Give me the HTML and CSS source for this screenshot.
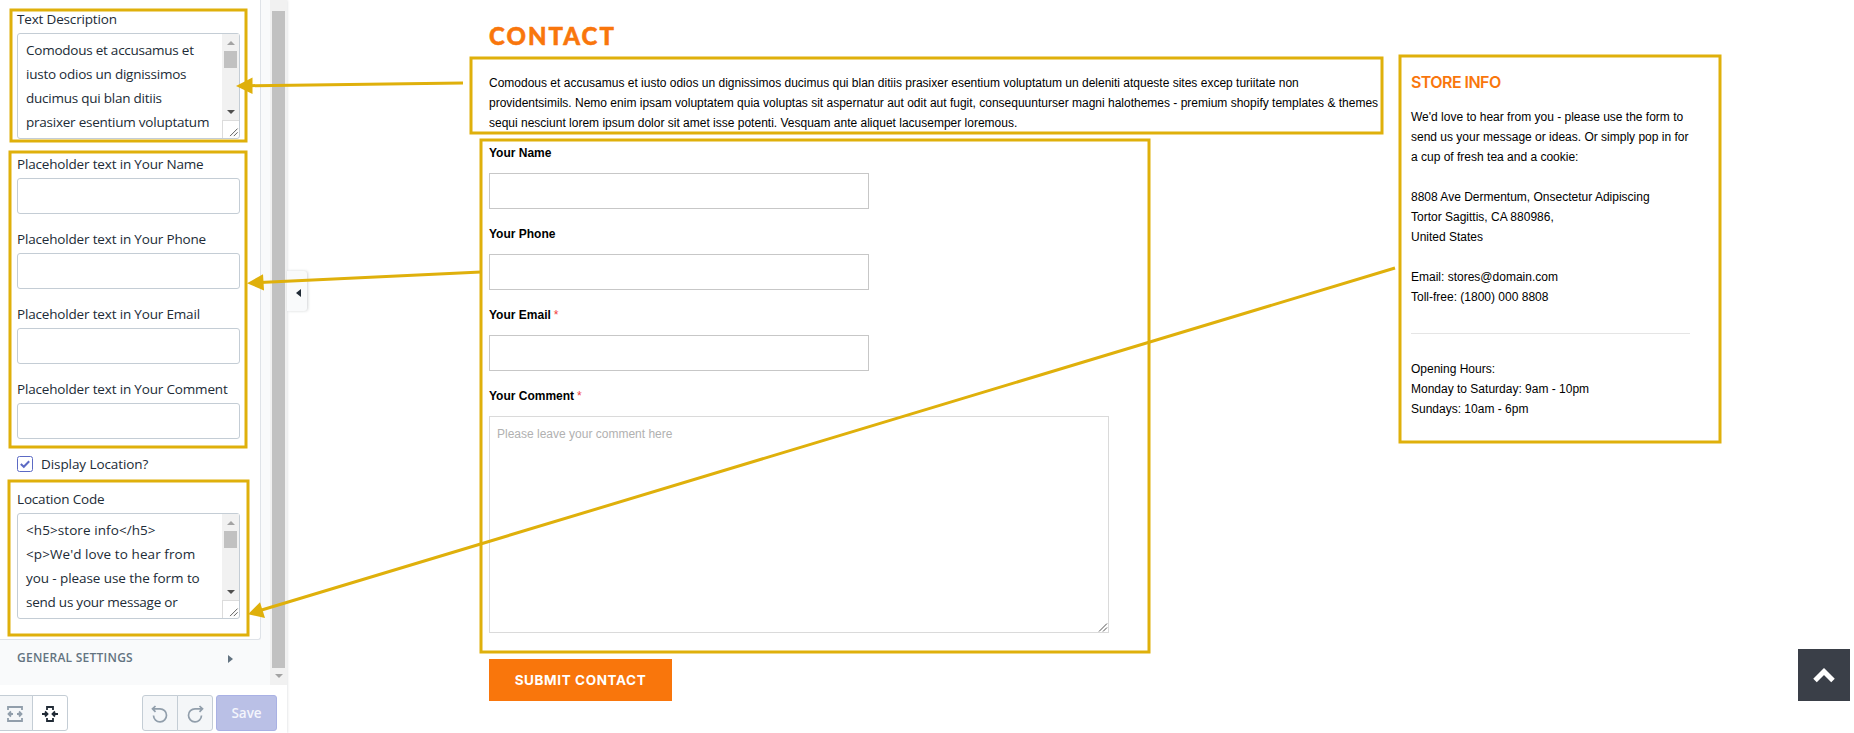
FILE: index.html
```
<!DOCTYPE html>
<html lang="en">
<head>
<meta charset="utf-8">
<title>Contact page settings</title>
<link rel="stylesheet" href="styles.css">
</head>
<body>
<div class="app">
  <aside class="sidebar">
    <div class="scroller">
      <div class="scroll-content">
        <section class="panel">
          <div class="label first">Text Description</div>
          <div class="textbox">
            <div class="textbox-lines">Comodous et accusamus et<br>iusto odios un dignissimos<br>ducimus qui blan ditiis<br>prasixer esentium voluptatum</div>
            <div class="mini-scroll">
              <div class="mini-track"><i class="tri up"></i><i class="mini-thumb"></i><i class="tri down"></i></div>
              <svg class="grip" width="17" height="17" viewBox="0 0 17 17"><path d="M7.500 15.500L15.500 7.500M11.500 15.500L15.500 11.500"/></svg>
            </div>
          </div>
          <div class="fields">
            <div class="field"><div class="label">Placeholder text in Your Name</div><div class="input"></div></div>
            <div class="field"><div class="label">Placeholder text in Your Phone</div><div class="input"></div></div>
            <div class="field"><div class="label">Placeholder text in Your Email</div><div class="input"></div></div>
            <div class="field"><div class="label">Placeholder text in Your Comment</div><div class="input"></div></div>
          </div>
          <div class="check-row">
            <svg width="16" height="16" viewBox="0 0 16 16"><rect x=".5" y=".5" width="15" height="15" rx="2" fill="#fff" stroke="#5c6ac4"/><path d="M3.800 8l3 2.800 5.400-5.600" fill="none" stroke="#5c6ac4" stroke-width="2"/></svg>
            <span>Display Location?</span>
          </div>
          <div class="label location">Location Code</div>
          <div class="textbox">
            <div class="textbox-lines"><span class="code">&lt;h5&gt;store info&lt;/h5&gt;<br>&lt;p&gt;We'd love to hear from</span><br><span class="loose">you - please use the form to</span><br>send us your message or</div>
            <div class="mini-scroll">
              <div class="mini-track"><i class="tri up"></i><i class="mini-thumb"></i><i class="tri down"></i></div>
              <svg class="grip" width="17" height="17" viewBox="0 0 17 17"><path d="M7.500 15.500L15.500 7.500M11.500 15.500L15.500 11.500"/></svg>
            </div>
          </div>
        </section>
        <div class="general"><span>GENERAL SETTINGS</span><i class="tri right"></i></div>
      </div>
      <div class="scrollbar"><i class="thumb"></i><i class="tri down"></i></div>
    </div>
    <footer class="toolbar">
      <div class="btn wide">
        <svg width="18" height="18" viewBox="0 0 18 18" fill="none" stroke="#919eab" stroke-width="1.800"><path d="M2 5V2h14v3M2 13v3h14v-3M2 9h5M11 9h5M5 6.500L2.500 9 5 11.500M13 6.500L15.500 9 13 11.500"/></svg>
      </div>
      <div class="btn narrow">
        <svg width="18" height="18" viewBox="0 0 18 18" fill="none" stroke="#212b36" stroke-width="1.800"><path d="M6 5V2h6v3M6 13v3h6v-3M1 9h5.500M17 9h-5.500M4 6.500L6.500 9 4 11.500M14 6.500L11.500 9l2.500 2.500"/></svg>
      </div>
      <div class="btn undo">
        <svg width="18" height="18" viewBox="0 0 18 18" fill="none" stroke="#919eab" stroke-width="1.700"><path d="M4.500 1L1.500 3.800l3 3M1.500 3.800H9a6.500 6.500 0 1 1-6.500 6.700"/></svg>
      </div>
      <div class="btn redo">
        <svg width="18" height="18" viewBox="0 0 18 18" fill="none" stroke="#919eab" stroke-width="1.700"><path d="M13.500 1l3 2.800-3 3M16.500 3.800H9a6.500 6.500 0 1 0 6.500 6.700"/></svg>
      </div>
      <div class="save">Save</div>
    </footer>
    <div class="collapse"><i class="tri left"></i></div>
  </aside>

  <main class="preview">
    <section class="contact">
      <h1>CONTACT</h1>
      <p class="intro">Comodous et accusamus et iusto odios un dignissimos ducimus qui blan ditiis prasixer esentium voluptatum un deleniti atqueste sites excep turiitate non<br>providentsimils. Nemo enim ipsam voluptatem quia voluptas sit aspernatur aut odit aut fugit, consequunturser magni halothemes - premium shopify templates &amp; themes<br>sequi nesciunt lorem ipsum dolor sit amet isse potenti. Vesquam ante aliquet lacusemper loremous.</p>
      <div class="form-row"><div class="form-label">Your Name</div><div class="form-input"></div></div>
      <div class="form-row"><div class="form-label">Your Phone</div><div class="form-input"></div></div>
      <div class="form-row"><div class="form-label">Your Email <em>*</em></div><div class="form-input"></div></div>
      <div class="form-row comment-row"><div class="form-label">Your Comment <em>*</em></div>
        <div class="form-comment"><span>Please leave your comment here</span>
          <svg class="corner" width="10" height="10" viewBox="0 0 10 10"><path d="M1 9.500L9 1.500M5 9.500L9 5.500"/></svg>
        </div>
      </div>
      <div class="submit"><span>SUBMIT CONTACT</span></div>
    </section>
    <section class="store">
      <h5>STORE INFO</h5>
      <p>We'd love to hear from you - please use the form to<br>send us your message or ideas. Or simply pop in for<br>a cup of fresh tea and a cookie:</p>
      <p>8808 Ave Dermentum, Onsectetur Adipiscing<br>Tortor Sagittis, CA 880986,<br>United States</p>
      <p>Email: stores@domain.com<br>Toll-free: (1800) 000 8808</p>
      <p class="hours">Opening Hours:<br>Monday to Saturday: 9am - 10pm<br>Sundays: 10am - 6pm</p>
    </section>
  </main>
  <div class="to-top"><svg width="24" height="18" viewBox="0 0 24 18"><path d="M3 14.500L12 5.500l9 9" fill="none" stroke="#fff" stroke-width="5"/></svg></div>

  <svg class="notes" width="1854" height="733" viewBox="0 0 1854 733">
    <g fill="none" stroke="#dfb00b" stroke-width="3">
      <rect x="11" y="10" width="235" height="131"/>
      <rect x="10" y="152" width="236" height="295"/>
      <rect x="9" y="481" width="239" height="154"/>
      <rect x="471" y="58" width="911" height="75"/>
      <rect x="481" y="140" width="668" height="512"/>
      <rect x="1400" y="56" width="320" height="386"/>
      <path d="M463 83L250 85.700M481 272L260 282.500M1395 268L260 610.500"/>
    </g>
    <g fill="#dfb00b">
      <path d="M236 86L252.500 77.500V94z"/>
      <path d="M247 283.200L263 274.300L264 290.500z"/>
      <path d="M248 614.200L260 602.200L265 618z"/>
    </g>
  </svg>
</div>
</body>
</html>
```
FILE: styles.css
```
* { box-sizing: border-box; }
body { margin: 0; background: #fff; overflow: hidden; }
.app { position: relative; display: flex; width: 1854px; height: 733px; overflow: hidden; }

.sidebar {
  position: relative; width: 287px; height: 733px; display: flex; flex-direction: column;
  font: 14px/20px "Open Sans", sans-serif; color: #212b36; background: #fff;
  box-shadow: 0 0 3px rgba(33, 43, 54, .2);
}
.scroller { display: flex; height: 685px; background: #f9fafb; }
.scroll-content { width: 270px; }
.panel {
  width: 261px; height: 640px; padding: 9px 20px 0 17px; background: #fff;
  border-right: 1px solid #dfe3e8; border-bottom: 1px solid #dfe3e8; border-radius: 0 0 3px 0;
}
.label { height: 20px; font-size: 13.5px; letter-spacing: -.17px; white-space: nowrap; }
.label.first { margin-bottom: 4px; }
.textbox {
  display: flex; justify-content: space-between; width: 223px; height: 106px;
  border: 1px solid #c4cdd5; border-radius: 3px; background: #fff;
}
.textbox-lines { width: 204px; padding: 4px 0 0 8px; font-size: 13.5px; line-height: 24px; letter-spacing: -.24px; white-space: nowrap; }
.textbox-lines .code { letter-spacing: .08px; }
.textbox-lines .loose { letter-spacing: -.08px; }
.mini-scroll { width: 17px; }
.mini-track { height: 87px; background: #f1f1f1; display: flex; flex-direction: column; align-items: center; padding-top: 7px; border-bottom: 1px solid #dcdcdc; }
.mini-thumb { width: 13px; height: 17px; margin-top: 6px; margin-bottom: 42px; background: #c1c1c1; }
.grip { display: block; border-left: 1px solid #dcdcdc; }
.grip path, .corner path { stroke: #555; stroke-width: 1; fill: none; }
.tri { display: block; width: 0; height: 0; border: 0 solid transparent; flex: none; }
.tri.up { border-width: 0 4px 4px; border-bottom-color: #a3a3a3; }
.tri.down { border-width: 4px 4px 0; border-top-color: #505050; }
.tri.right { border-width: 4px 0 4px 5px; border-left-color: #637381; }
.tri.left { border-width: 4px 5px 4px 0; border-right-color: #212b36; }
.fields { padding-top: 15px; display: flex; flex-direction: column; gap: 15px; }
.field { height: 60px; }
.input { width: 223px; height: 36px; margin-top: 4px; border: 1px solid #c4cdd5; border-radius: 3px; }
.check-row { display: flex; align-items: center; gap: 8px; margin-top: 15px; height: 20px; font-size: 13.5px; letter-spacing: -.08px; }
.label.location { margin: 15px 0 4px; }
.general { display: flex; align-items: center; justify-content: space-between; padding: 0 37px 0 17px; height: 35px; font-size: 12px; font-weight: 600; letter-spacing: .25px; color: #637381; }
.general .tri { margin-top: 3px; }
.scrollbar { width: 17px; background: #f1f1f1; padding-top: 11px; display: flex; flex-direction: column; align-items: center; }
.thumb { width: 13px; height: 657px; background: #c1c1c1; margin-bottom: 6px; }
.scrollbar .tri.down { border-top-color: #a3a3a3; }
.toolbar { display: flex; height: 48px; padding-top: 10px; background: #fff; }
.btn { height: 36px; border: 1px solid #c4cdd5; background: #f4f6f8; display: flex; align-items: center; justify-content: center; padding-top: 2px; }
.btn svg { display: block; }
.btn.wide { width: 33px; border-left: 0; border-right: 0; padding-right: 3px; }
.btn.narrow { width: 36px; margin-left: -1px; background: #fff; border-radius: 0 3px 3px 0; }
.btn.undo { width: 36px; margin-left: 74px; border-radius: 3px 0 0 3px; }
.btn.redo { width: 36px; margin-left: -1px; border-radius: 0 3px 3px 0; }
.save { width: 61px; height: 36px; margin-left: 3px; border: 1px solid #a9b1e4; border-radius: 3px; background: #bac0e6; color: #f4f5fc; font-weight: 600; font-size: 13.5px; line-height: 35px; text-align: center; }
.collapse { position: absolute; left: 287px; top: 271px; width: 20px; height: 40px; padding: 3px 0 0 2px; background: #f9fafb; border-radius: 0 3px 3px 0; box-shadow: 1px 0 3px rgba(33, 43, 54, .2); display: flex; align-items: center; justify-content: center; }

.preview { display: flex; padding-left: 202px; font: 12px/20px "Liberation Sans", Arial, sans-serif; color: #000; }
.contact { width: 922px; white-space: nowrap; }
h1 { margin: 0; padding-top: 20px; height: 73px; font: 900 24px/32px Lato, sans-serif; letter-spacing: 2px; color: #f9760c; -webkit-text-stroke: .5px #f9760c; }
.intro { margin: 0 0 9px; }
.form-row { height: 81px; }
.form-label { height: 31px; padding-top: 1px; font-weight: bold; }
.form-label em { margin-left: -.5px; font-style: normal; font-weight: normal; color: #f03c3c; }
.form-input { width: 380px; height: 36px; border: 1px solid #c7c7c7; }
.form-comment { position: relative; width: 620px; height: 217px; border: 1px solid #dadada; padding: 7px; color: #b1b1b1; }
.corner { position: absolute; right: 0; bottom: 0; }
.comment-row { height: 274px; }
.submit { width: 183px; height: 42px; background: #f9760c; color: #fff; font: bold 13.5px/42px Inter, sans-serif; letter-spacing: .6px; text-align: center; }
.store { width: 279px; white-space: nowrap; }
h5 { margin: 0; padding-top: 72px; height: 107px; font: 600 16px/20px Inter, sans-serif; letter-spacing: -.55px; color: #f9760c; }
.store p { margin: 0 0 20px; }
.store .hours { margin-top: 26px; padding-top: 25px; border-top: 1px solid #e5e5e5; }
.to-top { position: absolute; left: 1798px; top: 649px; width: 52px; height: 52px; background: #3a3f48; display: flex; align-items: center; justify-content: center; }
.notes { position: absolute; left: 0; top: 0; pointer-events: none; }
```
